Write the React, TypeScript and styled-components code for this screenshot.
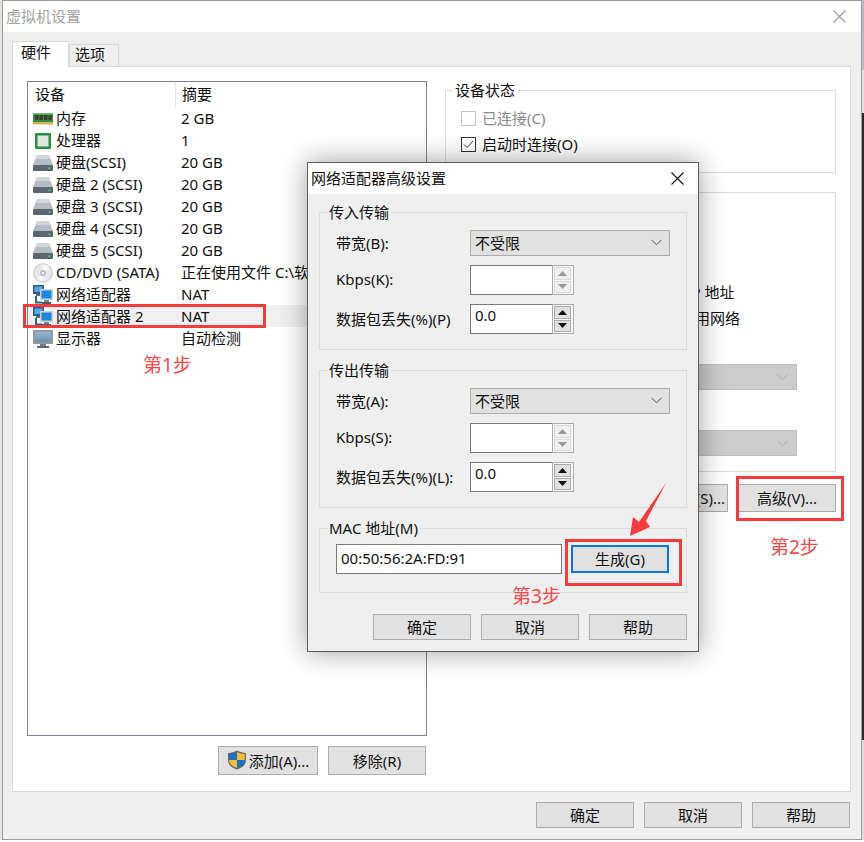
import React from 'react'
import styled, { createGlobalStyle } from 'styled-components'

const GlobalStyle = createGlobalStyle`
  html, body {
    margin: 0;
    padding: 0;
    background: #fff;
    overflow: hidden;
  }
  * {
    box-sizing: border-box;
  }
`

const Page = styled.div`
  position: relative;
  width: 864px;
  height: 842px;
  overflow: hidden;
  display: grid;
  grid-template-columns: 2px 860px 2px;
  grid-template-rows: 840px 2px;
  font-family: 'Noto Sans', 'Noto Sans CJK SC', sans-serif;
  font-size: 15px;
  color: #111;
`

const LeftEdge = styled.div`
  background: #e4e4e4;
`

const RightEdge = styled.div`
  background: linear-gradient(#b7bccb 0, #b7bccb 70px, #e0e0e0 70px, #e0e0e0 113px, #2b2b2b 113px, #2b2b2b 740px, #dcdcdc 740px);
`

const Backdrop = styled.div`
  grid-column: 1 / 4;
  padding-left: 110px;
  font-weight: 700;
  line-height: 20px;
  white-space: nowrap;
  overflow: hidden;
  background: #fff;
`

const Window = styled.div`
  display: flex;
  flex-direction: column;
  border: 1px solid #9c9c9c;
  background: #efefef;
`

const TitleBar = styled.div`
  height: 31px;
  flex: none;
  display: flex;
  align-items: center;
  justify-content: space-between;
  padding: 0 15px 0 3px;
  background: #fff;
  color: #a3a3a3;
`

const ModalTitle = styled(TitleBar)`
  color: #111;
  padding: 0 14px 0 3px;
`

const TitleText = styled.span`
  padding-bottom: 3px;
`

const Body = styled.div`
  flex: 1;
  display: flex;
  flex-direction: column;
  padding: 10px 10px 0 9px;
`

const TabStrip = styled.div`
  height: 25px;
  display: flex;
  align-items: flex-end;
  position: relative;
  z-index: 1;
  margin-bottom: -1px;
`

const Tab = styled.div<{ $active?: boolean }>`
  display: flex;
  align-items: center;
  padding: ${p => (p.$active ? '0 0 6px 8px' : '0 0 4px 5px')};
  border: 1px solid #d9d9d9;
  border-bottom: ${p => (p.$active ? 'none' : '1px solid #d9d9d9')};
  background: ${p => (p.$active ? '#fff' : '#f0f0f0')};
  width: ${p => (p.$active ? '57px' : '50px')};
  height: ${p => (p.$active ? '26px' : '23px')};
`

const TabPanel = styled.div`
  height: 726px;
  border: 1px solid #d9d9d9;
  background: #fff;
  padding: 14px 14px 0;
  display: grid;
  grid-template-columns: 400px 391px;
  column-gap: 18px;
`

const LeftColumn = styled.div`
  display: flex;
  flex-direction: column;
`

const DeviceList = styled.div`
  height: 655px;
  border: 1px solid #82828f;
  display: flex;
  flex-direction: column;
  overflow: hidden;
`

const ListHeader = styled.div`
  height: 25px;
  flex: none;
  display: grid;
  grid-template-columns: 147px 1fr;
  align-items: center;
`

const HeaderCell = styled.div<{ $divided?: boolean }>`
  height: 25px;
  display: flex;
  align-items: center;
  padding-left: ${p => (p.$divided ? '6px' : '7px')};
  padding-bottom: 2px;
  border-left: ${p => (p.$divided ? '1px solid #e4e4e4' : 'none')};
`

const DeviceRow = styled.div<{ $selected?: boolean }>`
  height: 22px;
  flex: none;
  display: grid;
  grid-template-columns: 147px 1fr;
  align-items: center;
  background: ${p => (p.$selected ? '#f0f0f0' : 'transparent')};
`

const DeviceName = styled.div`
  display: flex;
  align-items: center;
  padding-left: 5px;
  gap: 3px;
  white-space: nowrap;
`

const DeviceLabel = styled.span`
  padding-bottom: 2px;
`

const DeviceSummary = styled.div`
  padding: 0 0 2px 6px;
  white-space: nowrap;
`

const ButtonRow = styled.div`
  display: flex;
  justify-content: flex-end;
  gap: 10px;
  margin-top: 10px;
  padding-right: 1px;
`

const Button = styled.div<{ $focused?: boolean; $height?: number; $width?: number }>`
  width: ${p => p.$width ?? 98}px;
  height: ${p => p.$height ?? 28}px;
  display: flex;
  align-items: center;
  justify-content: center;
  gap: 2px;
  flex: none;
  padding-bottom: 1px;
  background: #e1e1e1;
  border: ${p => (p.$focused ? '2px solid #0078d7' : '1px solid #adadad')};
  white-space: nowrap;
`

const RightColumn = styled.div`
  display: flex;
  flex-direction: column;
  margin-top: -1px;
`

const Group = styled.fieldset<{ $height: number }>`
  margin: 0;
  height: ${p => p.$height}px;
  border: 1px solid #dcdcdc;
  padding: 0 15px 0 16px;
  min-width: 0;
`

const Legend = styled.legend`
  margin-left: -9px;
  padding: 0 2px;
  line-height: 20px;
`

const CheckRow = styled.div<{ $disabled?: boolean }>`
  height: 26px;
  display: flex;
  align-items: center;
  gap: 6px;
  color: ${p => (p.$disabled ? '#8a8a8a' : '#111')};
`

const CheckBox = styled.span<{ $disabled?: boolean }>`
  width: 15px;
  height: 15px;
  flex: none;
  display: flex;
  align-items: center;
  justify-content: center;
  border: 1px solid ${p => (p.$disabled ? '#c4c4c4' : '#333')};
  background: #fff;
`

const CheckLabel = styled.span`
  padding-bottom: 1px;
`

const StatusRows = styled.div`
  padding-top: 5px;
  margin-left: -1px;
`

const NetworkGroup = styled(Group)`
  margin-top: 9px;
`

const RadioRow = styled.div`
  height: 26px;
  display: flex;
  align-items: center;
  gap: 6px;
  white-space: nowrap;
`

const Radio = styled.span`
  width: 13px;
  height: 13px;
  flex: none;
  border: 1px solid #333;
  border-radius: 50%;
`

const NetworkRows = styled.div`
  padding-top: 24px;
  margin-left: 6px;
  margin-bottom: 34px;
`

const DisabledSelect = styled.div`
  width: 335px;
  height: 26px;
  display: flex;
  align-items: center;
  justify-content: flex-end;
  padding-right: 8px;
  background: #cccccc;
  border: 1px solid #bfbfbf;
  margin-bottom: 40px;
`

const RightButtons = styled(ButtonRow)`
  margin-top: 12px;
  padding-right: 0;
`

/* 网络适配器高级设置 dialog, floats above the settings window */
const Modal = styled.div`
  position: absolute;
  left: 307px;
  top: 162px;
  width: 392px;
  height: 490px;
  border: 1px solid #5e5e5e;
  background: #efefef;
  box-shadow: 0 0 26px rgba(0, 0, 0, 0.38);
  display: flex;
  flex-direction: column;
`

const ModalBody = styled.div`
  padding: 8px 11px 0;
  display: flex;
  flex-direction: column;
  gap: 10px;
`

const FormRows = styled.div`
  padding-top: 8px;
  display: flex;
  flex-direction: column;
  gap: 9px;
`

const FormRow = styled.div`
  display: grid;
  grid-template-columns: 134px auto;
  align-items: center;
  white-space: nowrap;
`

const FormLabel = styled.span`
  padding-bottom: 2px;
`

const Select = styled.div`
  width: 200px;
  height: 26px;
  display: flex;
  align-items: center;
  justify-content: space-between;
  padding: 0 7px 1px 4px;
  background: #e1e1e1;
  border: 1px solid #adadad;
`

const Spin = styled.div`
  width: 104px;
  height: 30px;
  display: flex;
`

const SpinInput = styled.div`
  width: 82px;
  height: 30px;
  background: #fff;
  border: 1px solid #7a7a7a;
  border-right: none;
  padding: 0 0 0 4px;
  line-height: 21px;
`

const SpinButtons = styled.div`
  width: 22px;
  height: 30px;
  border: 1px solid #adadad;
  background: #f6f6f6;
  display: flex;
  flex-direction: column;
  gap: 1px;
  padding: 1px 2px 1px 1px;
`

const SpinButton = styled.div<{ $enabled?: boolean }>`
  flex: 1;
  display: flex;
  align-items: center;
  justify-content: center;
  background: ${p => (p.$enabled ? '#e1e1e1' : '#efefef')};
  border: 1px solid ${p => (p.$enabled ? '#adadad' : '#d9d9d9')};
`

const MacRow = styled.div`
  display: flex;
  align-items: center;
  gap: 9px;
  padding-top: 6px;
`

const MacInput = styled.div`
  width: 226px;
  height: 30px;
  background: #fff;
  border: 1px solid #7a7a7a;
  padding: 0 0 0 4px;
  line-height: 27px;
`

const ModalButtons = styled.div`
  display: flex;
  justify-content: flex-end;
  gap: 10px;
  padding: 11px 0 0;
`

/* tutorial marks drawn over the screenshot */
const RedBox = styled.div<{ $x: number; $y: number; $w: number; $h: number }>`
  position: absolute;
  left: ${p => p.$x}px;
  top: ${p => p.$y}px;
  width: ${p => p.$w}px;
  height: ${p => p.$h}px;
  border: 3px solid #f73b3b;
`

const Step = styled.div<{ $x: number; $y: number }>`
  position: absolute;
  left: ${p => p.$x}px;
  top: ${p => p.$y}px;
  color: #f54a4a;
  font-size: 19px;
  line-height: 24px;
  white-space: nowrap;
`

const Arrow = styled.svg`
  position: absolute;
  left: 625px;
  top: 480px;
`

const X = ({ color, size = 13 }: { color: string; size?: number }) => (
  <svg width={size} height={size} viewBox="0 0 13 13" fill="none" stroke={color} strokeWidth="1.1">
    <path d="M0.5 0.5 12.5 12.5M12.5 0.5 0.5 12.5" />
  </svg>
)

const Chevron = ({ color = '#555' }: { color?: string }) => (
  <svg width="11" height="7" viewBox="0 0 11 7" fill="none" stroke={color} strokeWidth="1">
    <path d="M0.5 0.8 5.5 5.8 10.5 0.8" />
  </svg>
)

const Triangle = ({ up, color }: { up?: boolean; color: string }) => (
  <svg width="9" height="5" viewBox="0 0 9 5" fill={color}>
    <path d={up ? 'M4.5 0 9 5H0z' : 'M0 0h9L4.5 5z'} />
  </svg>
)

const RamIcon = () => (
  <svg width="20" height="20" viewBox="0 0 20 20">
    <rect x="0" y="4" width="20" height="10" fill="#2f8f3e" />
    <rect x="0" y="4" width="20" height="1.5" fill="#6cc06f" />
    <rect x="2" y="6" width="3.5" height="5" fill="#3b3f34" />
    <rect x="6.5" y="6" width="3.5" height="5" fill="#3b3f34" />
    <rect x="11" y="6" width="3.5" height="5" fill="#3b3f34" />
    <rect x="15.5" y="6" width="3" height="5" fill="#3b3f34" />
    <rect x="0" y="13" width="20" height="2.5" fill="#d8b04a" />
  </svg>
)

const CpuIcon = () => (
  <svg width="20" height="20" viewBox="0 0 20 20">
    <rect x="2" y="2" width="16" height="16" rx="1" fill="#2e8f45" />
    <rect x="4.5" y="4.5" width="11" height="11" fill="#dfe6df" />
  </svg>
)

const DiskIcon = () => (
  <svg width="20" height="20" viewBox="0 0 20 20">
    <path d="M4 2h12l4 10H0z" fill="#b6bcc4" />
    <path d="M4 2h12l1.5 4H2.500z" fill="#d2d7dc" />
    <rect x="0" y="12" width="20" height="6" rx="1" fill="#5c6670" />
    <rect x="15.5" y="14.5" width="2" height="1.5" fill="#58d05c" />
  </svg>
)

const DiscIcon = () => (
  <svg width="20" height="20" viewBox="0 0 20 20">
    <circle cx="10" cy="10" r="10" fill="#d3d5d8" />
    <circle cx="10" cy="10" r="8.5" fill="#e6e8ea" />
    <path d="M10 1.500a8.5 8.5 0 0 1 6.500 3L10 10z" fill="#f6f7f8" />
    <path d="M10 18.500a8.5 8.5 0 0 1-6.500-3L10 10z" fill="#f6f7f8" />
    <circle cx="10" cy="10" r="3" fill="#b4b8bc" />
    <circle cx="10" cy="10" r="1.3" fill="#fff" />
  </svg>
)

const NetworkIcon = () => (
  <svg width="20" height="20" viewBox="0 0 20 20">
    <rect x="0" y="0" width="11" height="9" fill="#2a5e88" />
    <rect x="1.5" y="1.5" width="8" height="5.5" fill="#5aa9e6" />
    <rect x="3" y="9" width="5" height="2" fill="#5f6b75" />
    <rect x="2" y="11" width="2" height="7" fill="#1f6f8a" />
    <rect x="2" y="16.5" width="7" height="2" fill="#1f6f8a" />
    <rect x="7" y="4" width="13" height="11" fill="#c7d3dc" />
    <rect x="8.5" y="5.5" width="10" height="8" fill="#1e88dd" />
    <rect x="11" y="15" width="5" height="2" fill="#77838d" />
    <rect x="9" y="17" width="9" height="2" fill="#4c5a66" />
  </svg>
)

const MonitorIcon = () => (
  <svg width="20" height="20" viewBox="0 0 20 20">
    <defs>
      <linearGradient id="monitorScreen" x1="0" y1="0" x2="0" y2="1">
        <stop offset="0" stopColor="#9db6cb" />
        <stop offset="1" stopColor="#6f8fae" />
      </linearGradient>
    </defs>
    <rect x="0" y="1" width="20" height="14" fill="#8f9aa5" />
    <rect x="2" y="3" width="16" height="10" fill="url(#monitorScreen)" />
    <rect x="7" y="15" width="6" height="2" fill="#77818a" />
    <rect x="4" y="17" width="12" height="2" fill="#5c6670" />
  </svg>
)

const ShieldIcon = () => (
  <svg width="20" height="20" viewBox="0 0 20 20">
    <path d="M10 0.5 C13 2 16 3 19 3 V10 C19 15 15 18 10 19.5 C5 18 1 15 1 10 V3 C4 3 7 2 10 0.5Z" fill="#6b6b6b" />
    <path d="M10 2v8H2.2V4C5 4 8 3 10 2z" fill="#1a73c9" />
    <path d="M10 2c2 1 5 2 7.8 2v6H10z" fill="#f6c02c" />
    <path d="M2.2 10H10v8C6 16.8 2.2 14.5 2.2 10z" fill="#f6c02c" />
    <path d="M10 10h7.8c0 4.5-3.8 6.8-7.8 8z" fill="#1a73c9" />
  </svg>
)

const devices = [
  { icon: <RamIcon />, name: '内存', summary: '2 GB' },
  { icon: <CpuIcon />, name: '处理器', summary: '1' },
  { icon: <DiskIcon />, name: '硬盘(SCSI)', summary: '20 GB' },
  { icon: <DiskIcon />, name: '硬盘 2 (SCSI)', summary: '20 GB' },
  { icon: <DiskIcon />, name: '硬盘 3 (SCSI)', summary: '20 GB' },
  { icon: <DiskIcon />, name: '硬盘 4 (SCSI)', summary: '20 GB' },
  { icon: <DiskIcon />, name: '硬盘 5 (SCSI)', summary: '20 GB' },
  { icon: <DiscIcon />, name: 'CD/DVD (SATA)', summary: '正在使用文件 C:\\软件\\镜像\\CentOS-7.iso' },
  { icon: <NetworkIcon />, name: '网络适配器', summary: 'NAT' },
  { icon: <NetworkIcon />, name: '网络适配器 2', summary: 'NAT', selected: true },
  { icon: <MonitorIcon />, name: '显示器', summary: '自动检测' }
]

function Transfer({ title, bandwidth, kbps, loss }: { title: string; bandwidth: string; kbps: string; loss: string }) {
  return (
    <Group $height={148}>
      <Legend>{title}</Legend>
      <FormRows>
        <FormRow>
          <FormLabel>{bandwidth}</FormLabel>
          <Select>
            不受限
            <Chevron />
          </Select>
        </FormRow>
        <FormRow>
          <FormLabel>{kbps}</FormLabel>
          <Spin>
            <SpinInput />
            <SpinButtons>
              <SpinButton>
                <Triangle up color="#9a9a9a" />
              </SpinButton>
              <SpinButton>
                <Triangle color="#9a9a9a" />
              </SpinButton>
            </SpinButtons>
          </Spin>
        </FormRow>
        <FormRow>
          <FormLabel>{loss}</FormLabel>
          <Spin>
            <SpinInput>0.0</SpinInput>
            <SpinButtons>
              <SpinButton $enabled>
                <Triangle up color="#111" />
              </SpinButton>
              <SpinButton $enabled>
                <Triangle color="#111" />
              </SpinButton>
            </SpinButtons>
          </Spin>
        </FormRow>
      </FormRows>
    </Group>
  )
}

export default function App() {
  return (
    <Page>
      <GlobalStyle />
      <LeftEdge />
      <Window>
        <TitleBar>
          <TitleText>虚拟机设置</TitleText>
          <X color="#9a9a9a" />
        </TitleBar>
        <Body>
          <TabStrip>
            <Tab $active>硬件</Tab>
            <Tab>选项</Tab>
          </TabStrip>
          <TabPanel>
            <LeftColumn>
              <DeviceList>
                <ListHeader>
                  <HeaderCell>设备</HeaderCell>
                  <HeaderCell $divided>摘要</HeaderCell>
                </ListHeader>
                {devices.map(device => (
                  <DeviceRow key={device.name} $selected={device.selected}>
                    <DeviceName>
                      {device.icon}
                      <DeviceLabel>{device.name}</DeviceLabel>
                    </DeviceName>
                    <DeviceSummary>{device.summary}</DeviceSummary>
                  </DeviceRow>
                ))}
              </DeviceList>
              <ButtonRow>
                <Button $width={100} $height={29}>
                  <ShieldIcon />
                  添加(A)...
                </Button>
                <Button $height={29}>移除(R)</Button>
              </ButtonRow>
            </LeftColumn>
            <RightColumn>
              <Group $height={93}>
                <Legend>设备状态</Legend>
                <StatusRows>
                  <CheckRow $disabled>
                    <CheckBox $disabled />
                    <CheckLabel>已连接(C)</CheckLabel>
                  </CheckRow>
                  <CheckRow>
                    <CheckBox>
                      <svg width="13" height="13" viewBox="0 0 13 13" fill="none" stroke="#444" strokeWidth="1">
                        <path d="M2 6.5 5 9.5 11 3" />
                      </svg>
                    </CheckBox>
                    <CheckLabel>启动时连接(O)</CheckLabel>
                  </CheckRow>
                </StatusRows>
              </Group>
              <NetworkGroup $height={290}>
                <Legend>网络连接</Legend>
                <NetworkRows>
                  <RadioRow>
                    <Radio />
                    桥接模式(B): 直接连接物理网络
                  </RadioRow>
                  <RadioRow>
                    <Radio />
                    复制物理网络连接状态(P)
                  </RadioRow>
                  <RadioRow>
                    <Radio />
                    NAT 模式(N): 用于共享主机的 IP 地址
                  </RadioRow>
                  <RadioRow>
                    <Radio />
                    仅主机模式(H): 与主机共享的专用网络
                  </RadioRow>
                </NetworkRows>
                <DisabledSelect>
                  <Chevron color="#a9a9a9" />
                </DisabledSelect>
                <DisabledSelect>
                  <Chevron color="#a9a9a9" />
                </DisabledSelect>
              </NetworkGroup>
              <RightButtons>
                <Button>LAN 区段(S)...</Button>
                <Button>高级(V)...</Button>
              </RightButtons>
            </RightColumn>
          </TabPanel>
          <ButtonRow>
            <Button $height={26}>确定</Button>
            <Button $height={26}>取消</Button>
            <Button $height={26}>帮助</Button>
          </ButtonRow>
        </Body>
      </Window>
      <RightEdge />
      <Backdrop>辅助: 初始化</Backdrop>

      <RedBox $x={23} $y={304} $w={243} $h={24} />
      <Step $x={143} $y={353}>第1步</Step>
      <RedBox $x={736} $y={476} $w={108} $h={45} />
      <Step $x={770} $y={535}>第2步</Step>

      <Modal>
        <ModalTitle>
          <TitleText>网络适配器高级设置</TitleText>
          <X color="#111" />
        </ModalTitle>
        <ModalBody>
          <Transfer title="传入传输" bandwidth="带宽(B):" kbps="Kbps(K):" loss="数据包丢失(%)(P)" />
          <Transfer title="传出传输" bandwidth="带宽(A):" kbps="Kbps(S):" loss="数据包丢失(%)(L):" />
          <Group $height={75}>
            <Legend>MAC 地址(M)</Legend>
            <MacRow>
              <MacInput>00:50:56:2A:FD:91</MacInput>
              <Button $focused $height={28}>生成(G)</Button>
            </MacRow>
          </Group>
          <ModalButtons>
            <Button $height={26}>确定</Button>
            <Button $height={26}>取消</Button>
            <Button $height={26}>帮助</Button>
          </ModalButtons>
        </ModalBody>
      </Modal>

      <RedBox $x={565} $y={539} $w={117} $h={47} />
      <Step $x={512} $y={584}>第3步</Step>
      <Arrow width="45" height="60" viewBox="625 480 45 60" fill="#f43c3c">
        <polygon points="666,483 646,521 650,527 630,536 633,517 639,522" />
      </Arrow>
    </Page>
  )
}
